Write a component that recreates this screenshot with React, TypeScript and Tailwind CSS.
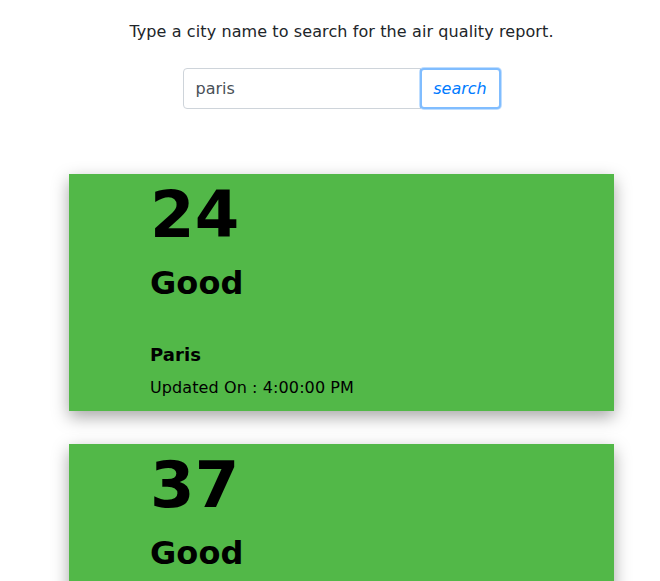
import React, { useState } from 'react';

interface Report {
  aqi: number;
  label: string;
  city: string;
  updated: string;
}

const reports: Report[] = [
  { aqi: 24, label: 'Good', city: 'Paris', updated: '4:00:00 PM' },
  { aqi: 37, label: 'Good', city: 'Paris', updated: '4:00:00 PM' },
];

function ReportCard({ report }: { report: Report }) {
  return (
    <div className="w-[545px] h-[237px] bg-[#52b848] shadow-[0_6px_16px_rgba(0,0,0,0.35)] pl-[81px] pt-[3px] text-black tracking-[0.1px]">
      <div className="text-[64px] font-bold leading-[76px]">{report.aqi}</div>
      <div className="text-[32px] font-bold leading-[38px] mt-[11px]">{report.label}</div>
      <div className="text-[18px] font-bold leading-[22px] mt-[42px]">{report.city}</div>
      <div className="text-[16px] leading-[24px] mt-[10px]">Updated On : {report.updated}</div>
    </div>
  );
}

export default function App() {
  const [city, setCity] = useState('paris');

  return (
    <div className="min-h-screen bg-white font-['DejaVu_Sans',sans-serif] text-[#212529] pl-[23px] flex flex-col items-center overflow-hidden">
      <p className="mt-[20px] text-[16px] leading-[24px] tracking-[0.1px]">
        Type a city name to search for the air quality report.
      </p>
      <div className="mt-[24px] flex">
        <input
          type="text"
          value={city}
          onChange={(e) => setCity(e.target.value)}
          className="w-[238px] h-[41px] px-3 border border-[#ced4da] rounded-l-[4px] text-[16px] text-[#495057] outline-none"
        />
        <button className="h-[41px] w-[81px] border-2 border-[#80bdff] rounded-[4px] -ml-[1px] text-[#007bff] italic text-[16px] shadow-[0_0_0_1px_rgba(0,123,255,0.25)] bg-white">
          search
        </button>
      </div>
      <div className="mt-[65px] flex flex-col gap-[33px]">
        {reports.map((r) => (
          <ReportCard key={r.aqi} report={r} />
        ))}
      </div>
    </div>
  );
}
